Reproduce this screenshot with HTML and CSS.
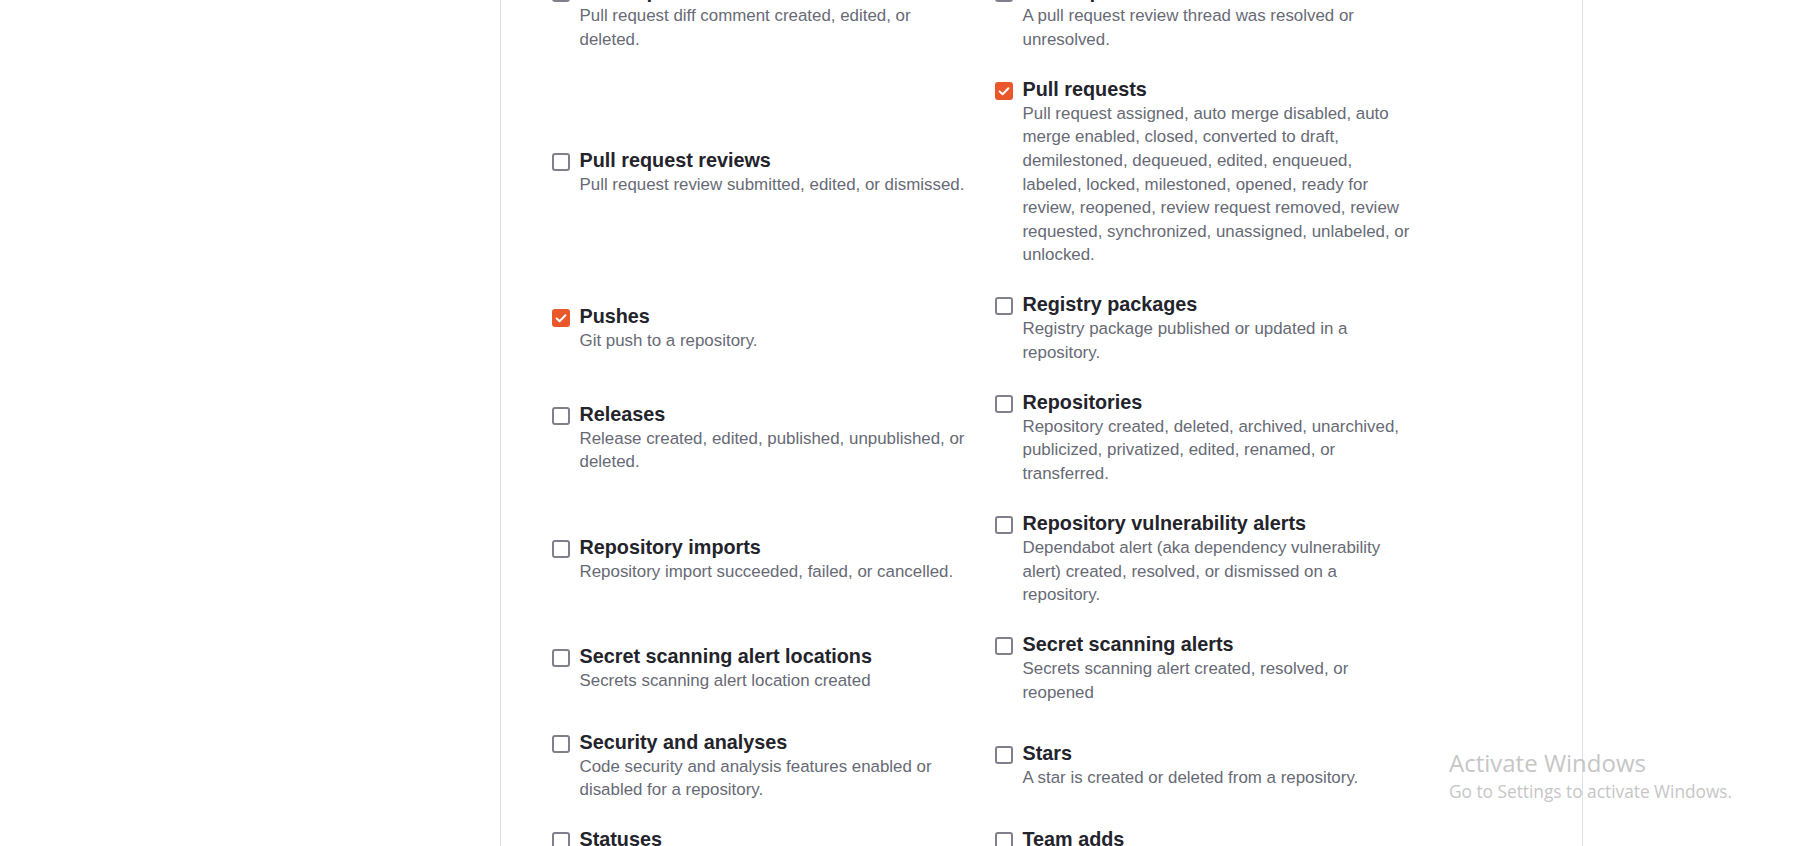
FILE: index.html
```html
<!DOCTYPE html>
<html lang="en">
<head>
<meta charset="utf-8">
<title>Webhook events</title>
<link rel="stylesheet" href="styles.css">
</head>
<body>
<div class="page">
  <div class="panel">
    <div class="events">
      <label class="event">
        <span class="box"></span>
        <span class="text"><span class="title">Pull request review comments</span><span class="desc">Pull request diff comment created, edited, or deleted.</span></span>
      </label>
      <label class="event">
        <span class="box"></span>
        <span class="text"><span class="title">Pull request review threads</span><span class="desc">A pull request review thread was resolved or unresolved.</span></span>
      </label>

      <label class="event">
        <span class="box"></span>
        <span class="text"><span class="title">Pull request reviews</span><span class="desc">Pull request review submitted, edited, or dismissed.</span></span>
      </label>
      <label class="event">
        <span class="box checked"><svg viewBox="0 0 18 18" width="18" height="18"><path d="M4.6 9.4 L7.6 12.3 L13.4 6.2" fill="none" stroke="#fff" stroke-width="2" stroke-linecap="round" stroke-linejoin="round"/></svg></span>
        <span class="text"><span class="title">Pull requests</span><span class="desc">Pull request assigned, auto merge disabled, auto merge enabled, closed, converted to draft, demilestoned, dequeued, edited, enqueued, labeled, locked, milestoned, opened, ready for review, reopened, review request removed, review requested, synchronized, unassigned, unlabeled, or unlocked.</span></span>
      </label>

      <label class="event">
        <span class="box checked"><svg viewBox="0 0 18 18" width="18" height="18"><path d="M4.6 9.4 L7.6 12.3 L13.4 6.2" fill="none" stroke="#fff" stroke-width="2" stroke-linecap="round" stroke-linejoin="round"/></svg></span>
        <span class="text"><span class="title">Pushes</span><span class="desc">Git push to a repository.</span></span>
      </label>
      <label class="event">
        <span class="box"></span>
        <span class="text"><span class="title">Registry packages</span><span class="desc">Registry package published or updated in a repository.</span></span>
      </label>

      <label class="event">
        <span class="box"></span>
        <span class="text"><span class="title">Releases</span><span class="desc">Release created, edited, published, unpublished, or deleted.</span></span>
      </label>
      <label class="event">
        <span class="box"></span>
        <span class="text"><span class="title">Repositories</span><span class="desc">Repository created, deleted, archived, unarchived, publicized, privatized, edited, renamed, or transferred.</span></span>
      </label>

      <label class="event">
        <span class="box"></span>
        <span class="text"><span class="title">Repository imports</span><span class="desc">Repository import succeeded, failed, or cancelled.</span></span>
      </label>
      <label class="event">
        <span class="box"></span>
        <span class="text"><span class="title">Repository vulnerability alerts</span><span class="desc">Dependabot alert (aka dependency vulnerability alert) created, resolved, or dismissed on a repository.</span></span>
      </label>

      <label class="event">
        <span class="box"></span>
        <span class="text"><span class="title">Secret scanning alert locations</span><span class="desc">Secrets scanning alert location created</span></span>
      </label>
      <label class="event">
        <span class="box"></span>
        <span class="text"><span class="title">Secret scanning alerts</span><span class="desc">Secrets scanning alert created, resolved, or reopened</span></span>
      </label>

      <label class="event">
        <span class="box"></span>
        <span class="text"><span class="title">Security and analyses</span><span class="desc">Code security and analysis features enabled or disabled for a repository.</span></span>
      </label>
      <label class="event">
        <span class="box"></span>
        <span class="text"><span class="title">Stars</span><span class="desc">A star is created or deleted from a repository.</span></span>
      </label>

      <label class="event">
        <span class="box"></span>
        <span class="text"><span class="title">Statuses</span><span class="desc">Commit status updated from the API.</span></span>
      </label>
      <label class="event">
        <span class="box"></span>
        <span class="text"><span class="title">Team adds</span><span class="desc">Team added or modified on a repository.</span></span>
      </label>
    </div>
  </div>
</div>
<div class="activate">
  <div class="act-title">Activate Windows</div>
  <div class="act-sub">Go to Settings to activate Windows.</div>
</div>
</body>
</html>
```

FILE: styles.css
```css
html, body {
  margin: 0;
  padding: 0;
  height: 846px;
  overflow: hidden;
  background: #ffffff;
}

body {
  font-family: "Liberation Sans", Arial, sans-serif;
  position: relative;
}

.page {
  padding-left: 500px;
  height: 846px;
}

.panel {
  width: 1083px;
  height: 846px;
  box-sizing: border-box;
  border-left: 1px solid #dde1e7;
  border-right: 1px solid #dde1e7;
  padding-left: 51px;
  overflow: hidden;
}

.events {
  display: grid;
  grid-template-columns: 443px 443px;
  row-gap: 24.5px;
  align-items: center;
  margin-top: -21.7px;
}

.event {
  display: flex;
  align-items: flex-start;
  gap: 9.5px;
}

.box {
  flex: none;
  width: 18px;
  height: 18px;
  box-sizing: border-box;
  border: 2px solid #80808c;
  border-radius: 3px;
  margin-top: 6px;
  background: #fff;
  display: flex;
  align-items: center;
  justify-content: center;
}

.box.checked {
  border: none;
  background: #e9572a;
}

.box svg {
  display: block;
}

.text {
  display: flex;
  flex-direction: column;
  width: 389px;
}

.title {
  font-size: 19.8px;
  line-height: 26px;
  font-weight: 700;
  color: #23232b;
}

.desc {
  font-size: 16.9px;
  line-height: 23.55px;
  color: #676a75;
}

.activate {
  position: absolute;
  left: 1449px;
  top: 747px;
  font-family: "Open Sans", "Noto Sans", sans-serif;
  color: #c6c6c6;
}

.act-title {
  font-size: 24px;
  line-height: 32px;
}

.act-sub {
  font-size: 17.3px;
  line-height: 26px;
}
```
